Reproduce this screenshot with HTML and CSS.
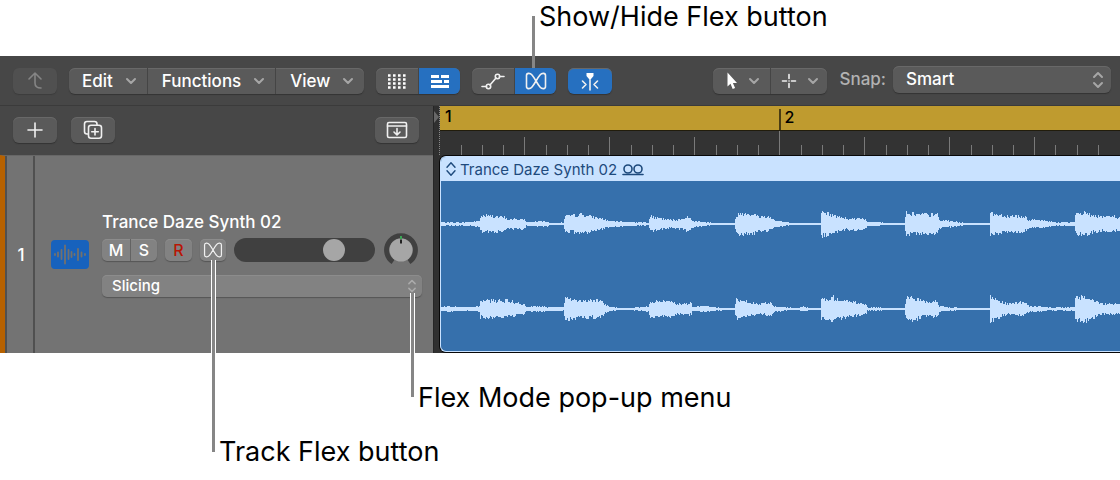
FILE: index.html
```html
<!DOCTYPE html>
<html lang="en">
<head>
<meta charset="utf-8">
<title>Tracks area</title>
<link rel="stylesheet" href="styles.css">
</head>
<body>
<svg class="defs" aria-hidden="true">
  <symbol id="down" viewBox="0 0 12 8"><path d="M2 2l4 4 4-4"/></symbol>
  <symbol id="updown" viewBox="0 0 12 18"><path d="M2 6l4-4 4 4M2 12l4 4 4-4"/></symbol>
  <symbol id="flex" viewBox="0 0 22 18"><path d="M1.500 3.500C1.500 0.800 5 0.600 7 3C10 6.500 12 11.500 15 15C17 17.400 20.500 17.200 20.500 14.500V3.500C20.500 0.800 17 0.600 15 3C12 6.500 10 11.500 7 15C5 17.400 1.500 17.200 1.500 14.500Z"/></symbol>
</svg>
<main class="figure">
  <p class="callout callout-top">Show/Hide Flex button</p>
  <section class="app">
    <div class="toolbar">
      <button class="btn dim" aria-label="Back"><svg class="icon" width="20" height="20" viewBox="0 0 20 20"><path d="M4 8l6-6 6 6M10 2v10q0 5 6 5"/></svg></button>
      <div class="group">
        <button class="menu">Edit<svg class="icon chev" width="12" height="8"><use href="#down"/></svg></button>
        <button class="menu">Functions<svg class="icon chev" width="12" height="8"><use href="#down"/></svg></button>
        <button class="menu">View<svg class="icon chev" width="12" height="8"><use href="#down"/></svg></button>
      </div>
      <div class="group">
        <button class="seg" aria-label="Live loops grid"><svg class="icon dots" width="20" height="16" viewBox="0 0 20 16"><path d="M1 2.500h18M1 6.500h18M1 10.500h18M1 14.500h18"/></svg></button>
        <button class="seg on" aria-label="Tracks view"><svg class="icon solid" width="20" height="16" viewBox="0 0 20 16"><path d="M1 2h8v3H1zM11 2h8v3h-8zM1 7h11v3H1zM14 7h5v3h-5zM1 12h18v3H1z"/></svg></button>
      </div>
      <div class="group">
        <button class="seg" aria-label="Show automation"><svg class="icon" width="24" height="18" viewBox="0 0 24 18"><path d="M1 14.500h4.500M9 13L15 6M18.500 4.500H23"/><circle cx="7.500" cy="14.500" r="2.200"/><circle cx="16.500" cy="4.500" r="2.200"/></svg></button>
        <button class="seg on" aria-label="Show/Hide Flex"><svg class="icon" width="22" height="18"><use href="#flex"/></svg></button>
      </div>
      <button class="btn on" aria-label="Catch playhead"><svg class="icon" width="20" height="20" viewBox="0 0 20 20"><path d="M2.500 10l3.500 3.500-3.500 3.500M17.500 10L14 13.500l3.500 3.500M10 5v14"/><path class="fill" d="M6.500 2h7v3L11 8H9L6.500 5z"/></svg></button>
      <div class="group tools">
        <button class="seg tool" aria-label="Pointer tool"><svg class="icon solid" width="12" height="18" viewBox="0 0 12 18"><path d="M1.500 0.500v14l3-2.700 2.200 5.200 2.400-1-2.200-5.100H11z"/></svg><svg class="icon chev" width="12" height="8"><use href="#down"/></svg></button>
        <button class="seg tool" aria-label="Marquee tool"><svg class="icon" width="16" height="16" viewBox="0 0 16 16"><path d="M8 1.500v4M8 10.500v4M1.500 8h4M10.500 8h4M8 8h0.100"/></svg><svg class="icon chev" width="12" height="8"><use href="#down"/></svg></button>
      </div>
      <div class="snap">
        <label for="snap">Snap:</label>
        <div class="pick"><select id="snap"><option>Smart</option></select><svg class="icon chev" width="12" height="18"><use href="#updown"/></svg></div>
      </div>
    </div>
    <div class="workspace">
      <div class="tracks">
        <div class="track-bar">
          <button class="btn" aria-label="Add track"><svg class="icon" width="16" height="16" viewBox="0 0 16 16"><path d="M8 1v14M1 8h14"/></svg></button>
          <button class="btn" aria-label="Duplicate track"><svg class="icon" width="20" height="20" viewBox="0 0 20 20"><path d="M5 14H4q-2.500 0-2.500-2.500V4Q1.500 1.500 4 1.500h7.500Q14 1.500 14 4v1M12 8.500v6.500M8.700 11.700h6.600"/><rect x="5.500" y="5.200" width="13" height="13" rx="2.500"/></svg></button>
          <button class="btn last" aria-label="Track header options"><svg class="icon" width="22" height="18" viewBox="0 0 22 18"><rect x="1.500" y="1.500" width="19" height="15" rx="1.500"/><path d="M1.500 5h19M11 7.500v6M8 11l3 3 3-3"/></svg></button>
        </div>
        <div class="track">
          <div class="number">1</div>
          <div class="header">
            <svg class="wave-icon" width="38" height="29" viewBox="0 0 38 29"><path d="M4 14v1M7 12.500v4M10.500 10v9M14 5.500v18M17.500 10v9M20.500 12v5M23.500 14v1M27 9v11M30.500 12.500v4M34 14v1"/></svg>
            <div class="controls">
              <div class="name">Trance Daze Synth 02</div>
              <div class="strip">
                <div class="group small"><button class="ms" aria-label="Mute">M</button><button class="ms" aria-label="Solo">S</button></div>
                <button class="mini rec" aria-label="Record enable">R</button>
                <button class="mini" aria-label="Track Flex"><svg class="icon thin" width="20" height="16" viewBox="0 0 22 18"><use href="#flex" width="22" height="18"/></svg></button>
                <input class="volume" type="range" min="0" max="100" value="75" aria-label="Volume">
                <svg class="knob" role="img" aria-label="Pan" width="36" height="34" viewBox="-1 0 36 34"><path class="ring" d="M9 29A14.400 14.400 0 1 1 25 29"/><circle cx="17" cy="17" r="11.500"/><path class="mark" d="M17 6.500v4"/><path class="zero" d="M17 3v3"/></svg>
              </div>
              <div class="pick flexmode"><select aria-label="Flex mode"><option>Slicing</option></select><svg class="icon chev" width="10" height="14" viewBox="0 0 12 18"><use href="#updown" width="12" height="18"/></svg></div>
            </div>
          </div>
        </div>
      </div>
      <div class="divider"><svg width="5" height="12" viewBox="0 0 5 12"><path d="M0 0l5 6-5 6z"/></svg></div>
      <div class="timeline">
        <div class="ruler">
          <div class="bars"><span>1</span><span>2</span></div>
          <svg class="ticks" viewBox="0 0 680 24" preserveAspectRatio="none" aria-hidden="true"><path id="ticks"/></svg>
        </div>
        <div class="region">
          <div class="region-title"><svg class="icon" width="12" height="16" viewBox="0 0 12 18"><path d="M1.500 7L6 2l4.500 5M1.500 11L6 16l4.500-5"/></svg>Trance Daze Synth 02<svg class="icon loop" width="22" height="13" viewBox="0 0 22 13"><circle cx="6" cy="6" r="4"/><circle cx="16" cy="6" r="4"/><path d="M1 11.500h20"/></svg></div>
          <svg class="audio" viewBox="0 0 679 170" preserveAspectRatio="none" role="img" aria-label="Stereo waveform"><path id="left"/><path id="right"/></svg>
        </div>
      </div>
    </div>
  </section>
  <p class="callout callout-mode">Flex Mode pop-up menu</p>
  <p class="callout callout-track">Track Flex button</p>
</main>
<script src="waveform.js"></script>
</body>
</html>
```
FILE: styles.css
```css
* { box-sizing: border-box; }

body {
  margin: 0;
  background: #fff;
  font-family: Inter, "Liberation Sans", sans-serif;
  color: #fff;
}

button, select, input { font: inherit; color: inherit; margin: 0; padding: 0; border: 0; }

.defs { position: absolute; width: 0; height: 0; }
.icon { fill: none; stroke: #f0f0f0; stroke-width: 1.6; stroke-linecap: round; stroke-linejoin: round; flex: none; }
.icon.solid, .icon .fill { fill: #fff; stroke: none; }
.icon.dots { stroke: #fff; stroke-width: 2.6; stroke-linecap: butt; stroke-dasharray: 2.600 2.400; }
.icon.chev { stroke: #a6a6a6; stroke-width: 2; }
.icon.thin { stroke-width: 1.4; }

.callout {
  position: relative;
  margin: 0;
  color: #000;
  font-size: 27px;
  line-height: 30px;
}
.callout::before {
  content: "";
  position: absolute;
  left: -7px;
  width: 3px;
  background: #868686;
  z-index: 2;
}
.callout-top { margin-left: 539px; height: 56px; line-height: 33px; }
.callout-top::before { top: 16px; height: 52px; }
.callout-mode { margin: 30px 0 0 418px; }
.callout-mode::before { bottom: 16px; height: 104px; }
.callout-track { margin: 24px 0 0 219px; padding-bottom: 11px; }
.callout-track::before { bottom: 26px; height: 192px; }
.callout-mode::after, .callout-track::after {
  content: "";
  position: absolute;
  left: -8px;
  width: 5px;
  background: #fff;
  z-index: 1;
}
.callout-mode::after { bottom: 60px; height: 60px; }
.callout-track::after { bottom: 125px; height: 93px; }

.toolbar {
  display: flex;
  align-items: center;
  gap: 12px;
  height: 50px;
  padding: 0 9px 0 13px;
  background: #474747;
  border-bottom: 1px solid #3b3b3b;
  font-size: 17px;
  font-weight: 500;
}
.btn, .group {
  height: 26px;
  border-radius: 6px;
  background: #5a5a5a;
  box-shadow: 0 1px 1px #333, inset 0 1px 0 #686868;
}
.btn { display: flex; align-items: center; justify-content: center; width: 44px; flex: none; }
.btn.dim { background: #505050; box-shadow: 0 1px 1px #3c3c3c; }
.btn.dim .icon { stroke: #858585; }
.group { display: flex; flex: none; overflow: hidden; }
.group button { background: none; display: flex; align-items: center; justify-content: center; }
.group button + button { border-left: 1px solid #454545; }
.menu { gap: 12px; padding: 0 10px 0 13px; }
.menu + .menu { padding-left: 14px; }
.seg { width: 42px; }
.group .on, .btn.on { background: #2670c0; }
.tools { margin-left: auto; }
.group .tool { width: 57px; gap: 10px; padding-left: 2px; }

.snap { display: flex; align-items: center; gap: 7px; padding-bottom: 3px; }
.snap label { color: #b2b2b2; }
.pick { position: relative; width: 218px; }
.pick select {
  display: block;
  appearance: none;
  width: 100%;
  height: 27px;
  padding: 0 13px;
  border-radius: 6px;
  background: #5a5a5a;
  box-shadow: 0 1px 1px #333, inset 0 1px 0 #686868;
}
.pick .icon { position: absolute; right: 7px; top: 5px; }

.workspace { display: grid; grid-template-columns: 433px 6px minmax(0, 1fr); }
.tracks { display: flex; flex-direction: column; background: #474747; }
.track-bar { display: flex; align-items: center; gap: 14px; height: 49px; padding: 0 14px 2px 13px; }
.track-bar .last { margin-left: auto; }

.track {
  display: flex;
  height: 198px;
  background: #737373;
  border-left: 5px solid #b66100;
  border-top: 1px solid #676767;
  font-weight: 500;
}
.number {
  display: flex;
  align-items: center;
  justify-content: center;
  width: 30px;
  padding-left: 2px;
  border: solid #505050;
  border-width: 0 2px;
  font-size: 17px;
}
.header { display: flex; align-items: center; gap: 13px; padding-left: 16px; flex: 1; }
.wave-icon { border-radius: 4px; background: #1762bd; stroke: #74716d; stroke-width: 1.8; stroke-linecap: round; flex: none; }
.controls { width: 320px; padding-bottom: 2px; }
.name { font-size: 17px; line-height: 22px; }
.strip { display: flex; align-items: center; gap: 8px; height: 34px; }
.small, .mini { height: 22px; }
.small, .mini { background: #828282; border-radius: 5px; box-shadow: 0 1px 1px #565656, inset 0 1px 0 #8c8c8c; }
.small button { width: 27px; font-size: 16px; }
.small button:first-child { width: 28px; }
.group.small button + button { border-color: #636363; }
.mini { display: flex; align-items: center; justify-content: center; width: 26px; font-size: 16px; flex: none; }
.rec { width: 27px; color: #b81505; }
.volume {
  appearance: none;
  width: 141px;
  height: 24px;
  padding: 0 1px;
  border-radius: 12px;
  background: #404040;
}
.volume::-webkit-slider-thumb { appearance: none; width: 22px; height: 22px; border-radius: 50%; background: #a6a6a6; }
.knob { fill: none; flex: none; }
.knob .ring { stroke: #404040; stroke-width: 5; }
.knob circle { fill: #a6a6a6; }
.knob .mark { stroke: #222; stroke-width: 2; }
.knob .zero { stroke: #3aa655; stroke-width: 2; }
.flexmode { width: 320px; margin-top: 8px; font-size: 15px; }
.pick.flexmode select { height: 22px; padding: 0 10px; background: #828282; border-radius: 5px; box-shadow: 0 1px 1px #565656, inset 0 1px 0 #8c8c8c; }
.pick.flexmode .icon { right: 5px; top: 4px; stroke: #aaa; }

.divider { background: #303030; border-left: 1px solid #262626; padding-top: 5px; }
.divider svg { display: block; fill: #686868; }

.timeline { display: flex; flex-direction: column; overflow: hidden; background: #303030; }
.ruler { height: 49px; background: #333; border-left: 1px dotted #888; }
.bars { display: flex; height: 25px; background: #bf9b2f; border-bottom: 1px solid #211c0c; }
.bars span { flex: 1; padding-left: 5px; color: #000; font-size: 16px; font-weight: 500; line-height: 21px; }
.bars span + span { border-left: 2px solid #4a3c13; margin: 3px 0 0 -2px; line-height: 16px; padding-left: 4px; }
.ticks { display: block; width: 100%; height: 24px; stroke: #7a7a7a; stroke-width: 1; }
.region {
  display: flex;
  flex-direction: column;
  flex: 1;
  margin: 1px 0 1px 1px;
  border: solid #c9e2ff;
  border-width: 1px 0 1px 1px;
  border-radius: 6px 0 0 6px;
  background: #3670ac;
  box-shadow: 0 0 0 1px #080808;
  overflow: hidden;
}
.region-title {
  display: flex;
  align-items: center;
  height: 24px;
  padding-left: 4px;
  gap: 3px;
  background: #c9e2ff;
  color: #1e4a7c;
  font-size: 15px;
}
.region-title .icon { stroke: #1e4a7c; }
.region-title .loop { margin-left: 2px; }
.audio { display: block; width: 100%; height: 170px; fill: #c9e2ff; }
```
FILE: waveform.js
```js
// Each pair is [x, half height] along the amplitude envelope of one channel.
const leftEnvelope = [
  [0, 2], [15, 1.5], [28, 2], [37, 3], [38, 8], [42, 9], [62, 7], [64, 5], [82, 5], [84, 2], [102, 3], [110, 1], [121, 1.5],
  [123, 8], [140, 10], [158, 6], [168, 3], [190, 2], [206, 1.5], [208, 8], [220, 5], [232, 4], [246, 7], [252, 3], [264, 2], [275, 1], [292, 1],
  [294, 10], [306, 12], [316, 8], [326, 8], [332, 4], [342, 2], [349, 1], [378, 1], [379, 13], [391, 9], [405, 6], [422, 6], [425, 2], [435, 2], [444, 1], [462, 1],
  [464, 13], [474, 10], [495, 10], [497, 4], [510, 3], [518, 1.5], [535, 1], [547, 1], [548, 12], [560, 9], [582, 8], [587, 4], [597, 4], [606, 3], [615, 1.5], [624, 2], [632, 2],
  [633, 10], [644, 12], [651, 9], [661, 7], [672, 8], [679, 6]
];
const rightEnvelope = [
  [0, 2], [6, 3], [18, 2], [28, 2], [37, 3], [38, 9], [64, 9], [82, 5], [84, 2], [96, 3], [105, 2], [121, 2],
  [123, 12], [135, 9], [158, 9], [164, 4], [168, 2], [182, 1], [200, 2], [206, 3], [208, 8], [228, 8], [236, 5], [249, 6], [250, 2], [264, 3], [275, 1.5], [292, 1],
  [294, 10], [306, 7], [316, 5], [328, 7], [332, 3], [345, 1.5], [355, 1], [361, 2.5], [368, 1], [378, 1], [379, 11], [391, 12], [400, 9], [412, 7], [424, 5], [425, 1.5], [432, 2], [444, 1], [462, 1],
  [464, 12], [474, 11], [480, 8], [495, 8], [497, 3], [506, 2], [520, 1], [547, 1], [548, 13], [558, 8], [565, 5], [580, 8], [587, 3], [598, 3], [606, 1.5], [632, 2],
  [633, 11], [641, 13], [651, 9], [661, 5], [679, 6]
];

function amplitude(points, x) {
  let i = 1;
  while (i < points.length - 1 && points[i][0] < x) i++;
  const [x0, a0] = points[i - 1];
  const [x1, a1] = points[i];
  return a0 + (a1 - a0) * (x - x0) / (x1 - x0);
}

function channel(points, middle, seed) {
  let state = seed;
  const noise = () => {
    state = (state * 1103515245 + 12345) % 2147483648;
    return state / 2147483648;
  };
  let d = "";
  for (let x = 0; x < 679; x++) {
    const a = amplitude(points, Math.max(0, x - 1));
    const up = Math.max(1, Math.round(a * (0.7 + 0.45 * noise())));
    const down = Math.max(1, Math.round(a * (0.7 + 0.45 * noise())));
    d += `M${x} ${middle - up}h1v${up + down}h-1z`;
  }
  return d;
}

document.getElementById("left").setAttribute("d", channel(leftEnvelope, 43, 7));
document.getElementById("right").setAttribute("d", channel(rightEnvelope, 128, 19));

let ticks = "";
for (let n = 1; n < 32; n++) {
  const top = n === 16 ? 0 : n % 4 === 0 ? 6 : 14;
  ticks += `M${Math.floor(n * 21.24) + 0.5} ${top}V24`;
}
document.getElementById("ticks").setAttribute("d", ticks);
```
